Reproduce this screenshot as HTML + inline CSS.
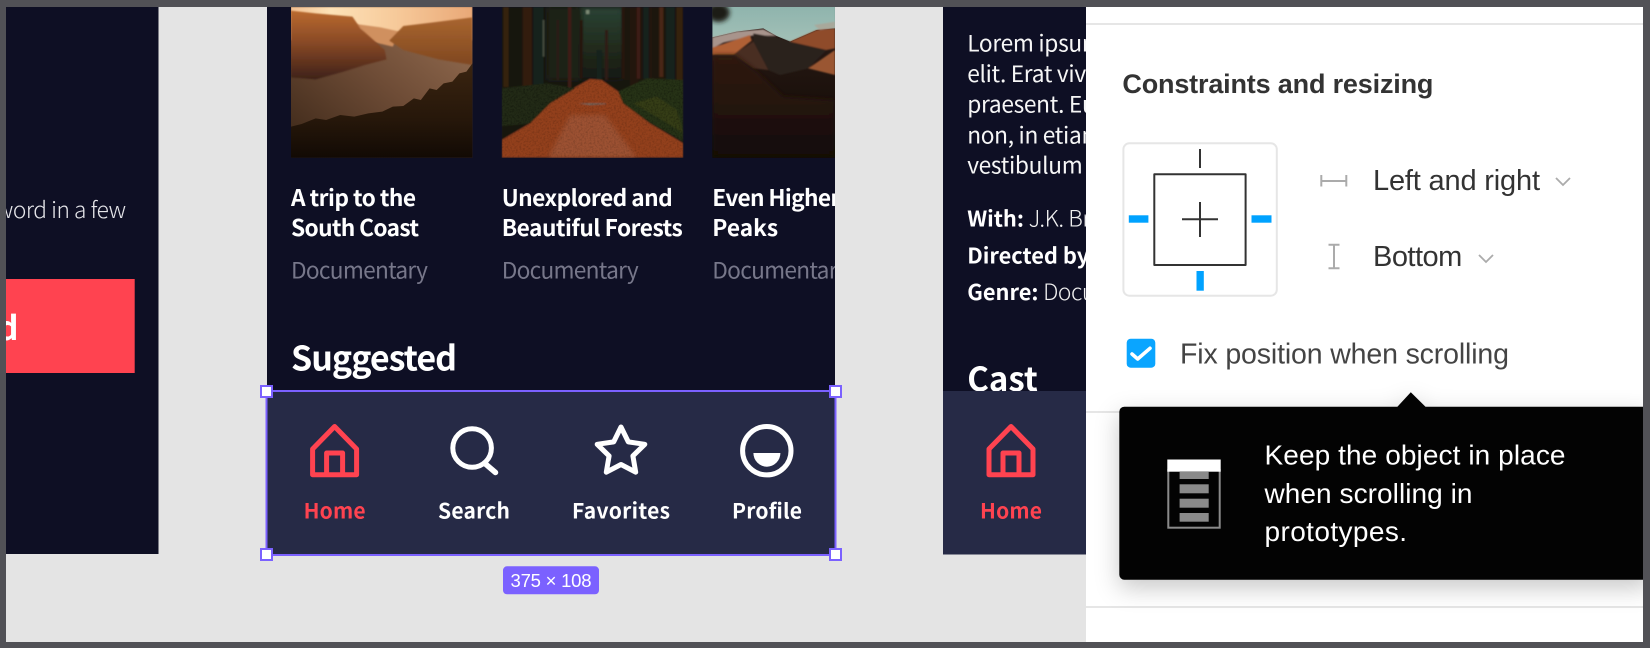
<!DOCTYPE html>
<html><head><meta charset="utf-8"><title>Fixed navigation</title>
<style>
html,body{margin:0;padding:0;width:1650px;height:648px;overflow:hidden;background:#e4e4e4}
svg{display:block}
.n{font-family:"Noto Sans CJK SC","Liberation Sans",sans-serif}
.b{font-weight:700}
.l{font-weight:300}
.i{font-family:"Liberation Sans",sans-serif}
</style></head><body>
<svg width="1650" height="648" viewBox="0 0 1650 648" xmlns="http://www.w3.org/2000/svg">
<defs>
<clipPath id="c1"><rect x="291" y="7" width="181.5" height="151"/></clipPath>
<clipPath id="c2"><rect x="501.7" y="7" width="181.7" height="151"/></clipPath>
<clipPath id="c3"><rect x="712.3" y="7" width="122.7" height="151"/></clipPath>
<clipPath id="c4"><rect x="267" y="7" width="568" height="384"/></clipPath>
<clipPath id="c5"><rect x="943" y="7" width="143" height="384"/></clipPath>
<clipPath id="rd"><path d="M300 237L255 262L180 310L120 370L35 420V473H580V430L480 370L400 310L385 275L335 240Z"/></clipPath>
<clipPath id="ms"><path d="M35 265L170 250L255 265L180 310L120 370L35 378ZM385 275L470 235L580 240V425L480 368L400 310Z"/></clipPath>
<linearGradient id="g1" x1="0" y1="0" x2="1" y2="0"><stop offset="0" stop-color="#f2c193"/><stop offset=".22" stop-color="#fde2b8"/><stop offset=".6" stop-color="#f6c898"/><stop offset="1" stop-color="#e9a877"/></linearGradient>
<linearGradient id="g2" x1="0" y1="0" x2="0" y2="1"><stop offset="0" stop-color="#b9692f"/><stop offset=".45" stop-color="#8a4a26"/><stop offset=".8" stop-color="#5a2f1d"/><stop offset="1" stop-color="#3d2218"/></linearGradient>
<linearGradient id="g3" x1="0" y1="0" x2="0" y2="1"><stop offset="0" stop-color="#a9652f"/><stop offset="1" stop-color="#7f4720"/></linearGradient>
<linearGradient id="g4" x1="1" y1="0" x2="0" y2="1"><stop offset="0" stop-color="#9b7356"/><stop offset=".5" stop-color="#6e4c36"/><stop offset="1" stop-color="#3a2617"/></linearGradient>
<linearGradient id="g5" gradientUnits="userSpaceOnUse" x1="0" y1="190" x2="0" y2="473"><stop offset="0" stop-color="#3a2410"/><stop offset=".6" stop-color="#26170a"/><stop offset="1" stop-color="#120a04"/></linearGradient>
<linearGradient id="g6" x1="0" y1="0" x2="0" y2="1"><stop offset="0" stop-color="#8fb4ad"/><stop offset="1" stop-color="#a9c4ba"/></linearGradient>
<linearGradient id="g7" gradientUnits="userSpaceOnUse" x1="0" y1="90" x2="0" y2="473"><stop offset="0" stop-color="#2a1a15"/><stop offset=".45" stop-color="#1d120d"/><stop offset="1" stop-color="#110906"/></linearGradient>
<linearGradient id="g9" gradientUnits="userSpaceOnUse" x1="0" y1="165" x2="0" y2="473"><stop offset="0" stop-color="#2e1a10"/><stop offset=".5" stop-color="#24130b"/><stop offset="1" stop-color="#110906"/></linearGradient>
<linearGradient id="g8" x1="0" y1="0" x2="0" y2="1"><stop offset="0" stop-color="#2a4234"/><stop offset=".6" stop-color="#20291b"/><stop offset="1" stop-color="#151811"/></linearGradient>
<filter id="bl" x="-10%" y="-10%" width="120%" height="120%"><feGaussianBlur stdDeviation="2.5"/></filter>
<filter id="bl2" x="-30%" y="-30%" width="160%" height="160%"><feGaussianBlur stdDeviation="7"/></filter>
<filter id="nz" x="0" y="0" width="100%" height="100%"><feTurbulence type="fractalNoise" baseFrequency=".18" numOctaves="2" seed="4"/><feColorMatrix values="0 0 0 0 0  0 0 0 0 0  0 0 0 0 0  2.4 0 0 0 -1"/></filter>
<g id="home" fill="none" stroke="#ff4350" stroke-width="5" stroke-linejoin="round" stroke-linecap="round">
<path d="M0 426.5L22 449V474.7H-22V449Z"/><path d="M-8 474V453H8V474"/>
</g>
</defs>

<rect width="1650" height="648" fill="#e4e4e4"/>

<!-- left panel -->
<rect x="6" y="7" width="152.5" height="547" fill="#0e0f24"/>
<text class="n l" x="125.6" y="218" font-size="22.7" fill="#e6e6ea" text-anchor="end" letter-spacing="-.45">a password in a few</text>
<rect x="0" y="279" width="134.7" height="94" fill="#ff4350"/>
<text class="n b" x="18.5" y="340" font-size="33" fill="#fff" text-anchor="end">Get Started</text>

<!-- middle panel -->
<rect x="267" y="7" width="568" height="547" fill="#0e0f24"/>

<!-- photo 1 -->
<g clip-path="url(#c1)"><g transform="scale(.3507,.3333)">
<rect x="829" y="21" width="518" height="452" fill="url(#g4)"/>
<rect x="829" y="21" width="518" height="100" fill="url(#g1)" filter="url(#bl)"/>
<path d="M1015 72L1085 82L1140 95L1120 140L1060 125Z" fill="#d0905f" filter="url(#bl)"/>
<path d="M1110 122L1150 78L1230 68L1347 52V195L1250 178L1150 150Z" fill="url(#g3)" filter="url(#bl)"/>
<path d="M829 32L900 40L1005 50L1028 85L1065 120L1097 150L1102 178L1040 195L980 215L900 238L829 232Z" fill="url(#g2)" filter="url(#bl)"/>
<path d="M829 380L860 372L900 355L930 360L970 345L1010 350L1050 340L1090 335L1120 320L1150 318L1180 295L1200 300L1225 265L1245 270L1265 250L1290 245L1310 220L1330 215L1347 190V473H829Z" fill="url(#g5)"/>
</g></g>

<!-- photo 2 -->
<g clip-path="url(#c2)"><g transform="translate(490,0) scale(.3333)">
<g filter="url(#bl)">
<rect x="35" y="21" width="545" height="452" fill="#15160f"/>
<rect x="270" y="21" width="130" height="220" fill="url(#g8)" filter="url(#bl2)"/>
<rect x="170" y="21" width="100" height="220" fill="#1f2016" filter="url(#bl2)"/>
<rect x="400" y="21" width="180" height="220" fill="#1a1610"/>
<g fill="#36200f">
<rect x="40" y="21" width="16" height="240"/><rect x="98" y="21" width="28" height="250" fill="#301a10"/><rect x="234" y="21" width="10" height="245" fill="#3d1f13"/><rect x="420" y="21" width="26" height="255" fill="#241410"/><rect x="440" y="21" width="11" height="215" fill="#3d1c12"/><rect x="508" y="21" width="12" height="210" fill="#4a2612"/><rect x="560" y="21" width="18" height="230"/><rect x="345" y="90" width="9" height="150" fill="#2e1a12"/><rect x="200" y="60" width="7" height="180" fill="#2b1b16"/><rect x="270" y="60" width="8" height="175" fill="#261810"/><rect x="395" y="21" width="8" height="215" fill="#261610"/><rect x="478" y="21" width="8" height="215" fill="#24160e"/></g>
<g fill="#12201a"><rect x="130" y="21" width="30" height="240"/><rect x="320" y="150" width="16" height="90"/><rect x="528" y="21" width="26" height="230"/><rect x="460" y="21" width="16" height="215"/></g>
<rect x="158" y="60" width="5" height="110" fill="#4a4f42"/>
<rect x="288" y="30" width="10" height="12" fill="#7c8a74"/>
<path d="M300 237L255 262L180 310L120 370L35 420V473H580V430L480 370L400 310L385 275L335 240Z" fill="#93401f"/>
<path d="M35 265L170 250L255 265L180 310L120 370L35 378Z" fill="#222a15"/>
<path d="M385 275L470 235L580 240V425L480 368L400 310Z" fill="#263016"/>
<path d="M430 310L500 290L560 330L580 400L500 350Z" fill="#363d19"/>
<path d="M265 310H345L350 312L300 315Z" fill="#6d6a60"/>
</g>
<path d="M240 345L345 345L440 473H175Z" fill="#a5644a" opacity=".5" filter="url(#bl2)"/>
<g clip-path="url(#rd)"><rect x="35" y="237" width="545" height="236" filter="url(#nz)" opacity=".16"/></g>
<g clip-path="url(#ms)"><rect x="35" y="235" width="545" height="195" filter="url(#nz)" opacity=".3"/></g>
</g></g>

<!-- photo 3 -->
<g clip-path="url(#c3)"><g transform="translate(490,0) scale(.3333)">
<rect x="667" y="21" width="368" height="452" fill="url(#g7)"/>
<rect x="667" y="21" width="368" height="140" fill="url(#g6)"/>
<ellipse cx="685" cy="38" rx="34" ry="28" fill="#1f1a15" filter="url(#bl2)"/>
<path d="M667 112L740 95L820 85L860 108L900 125L980 90L1035 85V473H667Z" fill="url(#g7)"/>
<g filter="url(#bl)">
<path d="M667 112L740 95L820 88L860 108L790 106L700 128L667 145Z" fill="#a8948c"/>
<path d="M667 165V143L780 105L785 122L730 165Z" fill="#b06035"/>
<path d="M790 100L870 115L900 125L1010 150L955 205L870 225L835 210L790 130Z" fill="#2a221d"/>
<path d="M730 165L790 125L835 210L790 205Z" fill="#4a2e22"/>
<path d="M900 125L980 90L1035 85V145L1010 150Z" fill="#8f4c2c"/>
<path d="M955 205L1035 150V225Z" fill="#9a5631"/>
<path d="M972 75L1035 65V82L990 90Z" fill="#b29c8c" opacity=".6"/>
</g>
<path d="M667 165H735L800 215L880 290L1035 300V473H667Z" fill="url(#g9)" filter="url(#bl2)"/>
</g></g>

<g clip-path="url(#c4)">
<g class="n b" font-size="22.7" fill="#fff">
<text x="291" y="206" textLength="125">A trip to the</text>
<text x="291" y="236" textLength="128">South Coast</text>
<text x="501.7" y="206" textLength="171">Unexplored and</text>
<text x="501.7" y="236" textLength="181">Beautiful Forests</text>
<text x="712.3" y="206" textLength="128">Even Higher</text>
<text x="712.3" y="236">Peaks</text>
</g>
<g class="n" font-size="22.7" fill="#77778a">
<text x="291" y="278.5" textLength="137">Documentary</text>
<text x="501.7" y="278.5" textLength="137">Documentary</text>
<text x="712.3" y="278.5" textLength="137">Documentary</text>
</g>
<text class="n b" x="291" y="370.7" font-size="34" fill="#fff" textLength="166">Suggested</text>
</g>

<!-- bottom nav middle -->
<rect x="267" y="391" width="568" height="163.5" fill="#262a46"/>
<use href="#home" transform="translate(334.6,0)"/>
<circle cx="472.1" cy="448" r="19.3" fill="none" stroke="#fff" stroke-width="5"/>
<path d="M485.5 464L495.5 472.5" fill="none" stroke="#fff" stroke-width="5.5" stroke-linecap="round"/>
<path d="M621 427L628.3 441.9L644.8 444.3L632.9 455.9L635.7 472.2L621 464.5L606.3 472.2L609.1 455.9L597.2 444.3L613.7 441.9Z" fill="none" stroke="#fff" stroke-width="5" stroke-linejoin="round"/>
<circle cx="766.8" cy="450.7" r="24.2" fill="none" stroke="#fff" stroke-width="5"/>
<path d="M753.4 453H780.4A13.5 13.7 0 0 1 753.4 453Z" fill="#fff"/>
<g class="n b" font-size="21" text-anchor="middle" fill="#fff">
<text x="334.6" y="518.5" fill="#ff4350" textLength="62">Home</text>
<text x="474" y="518.5" textLength="72">Search</text>
<text x="621" y="518.5" textLength="98">Favorites</text>
<text x="767" y="518.5" textLength="70">Profile</text>
</g>

<!-- selection -->
<rect x="266.5" y="391" width="569" height="164" fill="none" stroke="#7b61ff" stroke-width="2"/>
<g fill="#fff" stroke="#7b61ff" stroke-width="2">
<rect x="261" y="386" width="11" height="11"/>
<rect x="830" y="386" width="11" height="11"/>
<rect x="261" y="549" width="11" height="11"/>
<rect x="830" y="549" width="11" height="11"/>
</g>
<rect x="503" y="566.3" width="96" height="28" rx="4" fill="#7b61ff"/>
<text class="i" x="551" y="587" font-size="18.5" fill="#fff" text-anchor="middle" textLength="81">375 × 108</text>

<!-- right dark panel -->
<rect x="943" y="7" width="143" height="547" fill="#0e0f24"/>
<g clip-path="url(#c5)">
<g class="n" font-size="22.7" fill="#f6f6f6" letter-spacing="-.3">
<text x="967.2" y="51.7">Lorem ipsum dolor sit</text>
<text x="967.2" y="82">elit. Erat viverra sed</text>
<text x="967.2" y="112.7">praesent. Eu diam</text>
<text x="967.2" y="143.3">non, in etiam nulla</text>
<text x="967.2" y="173.3">vestibulum sit amet</text>
</g>
<g class="n l" font-size="22.7" fill="#f0f0f0">
<text x="967.2" y="226.7"><tspan font-weight="700" font-size="21.8" fill="#fff">With:</tspan><tspan letter-spacing="-.4"> J.K. Brown</tspan></text>
<text x="967.2" y="263.3"><tspan font-weight="700" font-size="21.8" fill="#fff">Directed by:</tspan><tspan letter-spacing="-.4"> John</tspan></text>
<text x="967.2" y="300"><tspan font-weight="700" font-size="21.8" fill="#fff">Genre:</tspan><tspan letter-spacing="-.4"> Documentary</tspan></text>
</g>
<text class="n b" x="967.2" y="391" font-size="33" fill="#fff">Cast</text>
</g>
<rect x="943" y="391" width="143" height="163.5" fill="#262a46"/>
<use href="#home" transform="translate(1011,0)"/>
<text class="n b" x="1011" y="518.5" font-size="21" fill="#ff4350" text-anchor="middle" textLength="62">Home</text>

<!-- white properties panel -->
<rect x="1086" y="0" width="564" height="648" fill="#fff"/>
<rect x="1086" y="23" width="560" height="2" fill="#e6e6e6"/>
<rect x="1086" y="411" width="560" height="2" fill="#e6e6e6"/>
<rect x="1086" y="606" width="560" height="2" fill="#e6e6e6"/>

<text class="i" x="1122.4" y="93" font-size="27" font-weight="700" fill="#333" textLength="311">Constraints and resizing</text>

<rect x="1123.4" y="143.3" width="153.4" height="152.4" rx="6" fill="#fff" stroke="#e6e6e6" stroke-width="2"/>
<rect x="1154.3" y="174.3" width="91.3" height="90.7" fill="none" stroke="#333" stroke-width="2" stroke-linejoin="round"/>
<path d="M1182 219.3H1218M1200 202V237M1200 149V168" fill="none" stroke="#333" stroke-width="2"/>
<g fill="#00a2ff">
<rect x="1128.8" y="215.3" width="19.6" height="7.4"/>
<rect x="1251.5" y="215.3" width="20" height="7.4"/>
<rect x="1196.5" y="271" width="7.3" height="19.7"/>
</g>
<path d="M1321.3 175V186.5M1346.3 175V186.5M1321.3 181H1346.3M1328.5 244.7H1339.5M1328.5 268.3H1339.5M1334 244.7V268.3" fill="none" stroke="#ababab" stroke-width="2"/>
<text class="i" x="1373" y="189.8" font-size="29" fill="#333" textLength="167">Left and right</text>
<path d="M1556 178L1563 185L1570 178" fill="none" stroke="#ababab" stroke-width="1.8"/>
<text class="i" x="1373" y="266.2" font-size="29" fill="#333" textLength="89.3">Bottom</text>
<path d="M1479 255L1486 262L1493 255" fill="none" stroke="#ababab" stroke-width="1.8"/>

<rect x="1126.7" y="338.7" width="28.6" height="29" rx="4" fill="#0aa5ff"/>
<path d="M1132 354L1137.7 359L1150 348.3" fill="none" stroke="#fff" stroke-width="3.6" stroke-linecap="round" stroke-linejoin="round"/>
<text class="i" x="1180" y="363.5" font-size="28.5" fill="#444" textLength="329">Fix position when scrolling</text>

<!-- tooltip -->
<g style="filter:drop-shadow(0 8px 12px rgba(0,0,0,.22))">
<path d="M1124.3 406.7H1397.4L1410.8 392.3L1425.5 406.7H1650V579.7H1124.3A5 5 0 0 1 1119.3 574.7V411.7A5 5 0 0 1 1124.3 406.7Z" fill="#030303"/>
</g>
<rect x="1168.3" y="470" width="51.4" height="57.7" fill="none" stroke="#8a8a8a" stroke-width="2"/>
<g fill="#8a8a8a">
<rect x="1179.6" y="472" width="29.1" height="7"/>
<rect x="1179.6" y="484.3" width="29.1" height="9"/>
<rect x="1179.6" y="498.7" width="29.1" height="9"/>
<rect x="1179.6" y="513" width="29.1" height="8.7"/>
</g>
<rect x="1167.3" y="459.5" width="53.4" height="12.2" fill="#fff"/>
<g class="i" font-size="28" fill="#fff">
<text x="1264.5" y="464.5" textLength="301">Keep the object in place</text>
<text x="1264.5" y="503" textLength="208">when scrolling in</text>
<text x="1264.5" y="541" textLength="142.5">prototypes.</text>
</g>

<!-- frame bars -->
<rect x="0" y="0" width="1650" height="7" fill="#515156"/>
<rect x="0" y="0" width="6" height="648" fill="#515156"/>
<rect x="1643" y="0" width="7" height="648" fill="#515156"/>
<rect x="0" y="642" width="1650" height="6" fill="#515156"/>
</svg>
</body></html>
